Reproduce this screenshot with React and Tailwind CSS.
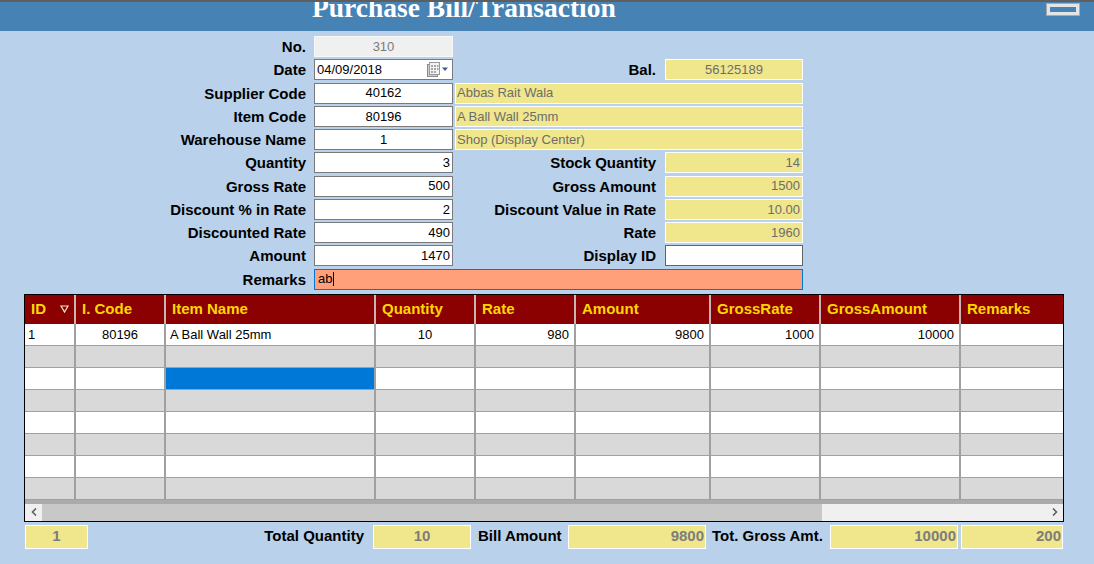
import React from 'react';

const cols = [
  { key: 'id', title: 'ID', w: 'w-[51px]', align: 'text-left pl-[3px]' },
  { key: 'code', title: 'I. Code', w: 'w-[90px]', align: 'text-center' },
  { key: 'name', title: 'Item Name', w: 'w-[210px]', align: 'text-left pl-[4px]' },
  { key: 'qty', title: 'Quantity', w: 'w-[100px]', align: 'text-center' },
  { key: 'rate', title: 'Rate', w: 'w-[100px]', align: 'text-right pr-[5px]' },
  { key: 'amount', title: 'Amount', w: 'w-[135px]', align: 'text-right pr-[5px]' },
  { key: 'grossRate', title: 'GrossRate', w: 'w-[110px]', align: 'text-right pr-[5px]' },
  { key: 'grossAmount', title: 'GrossAmount', w: 'w-[140px]', align: 'text-right pr-[5px]' },
  { key: 'remarks', title: 'Remarks', w: 'w-[102px]', align: 'text-left pl-[4px]' },
];

const rows = [
  { id: '1', code: '80196', name: 'A Ball Wall 25mm', qty: '10', rate: '980', amount: '9800', grossRate: '1000', grossAmount: '10000', remarks: '' },
  {}, {}, {}, {}, {}, {}, {},
];

const Label = ({ children, w = 'w-[306px]' }) => (
  <div className={`${w} shrink-0 text-right text-[15px] font-bold leading-none text-black`}>{children}</div>
);

// white editable box
const Input = ({ children, align = 'justify-center', w = 'w-[139px]', ml = 'ml-[8px]' }) => (
  <div className={`${ml} ${w} ${align} flex h-full shrink-0 items-center border border-[#7a7a7a] bg-white px-[2px] text-[13px] text-black`}>
    {children}
  </div>
);

// yellow read-only box
const ReadBox = ({ children, align = 'justify-end pr-[2px]', w = 'w-[138px]', ml = 'ml-[9px]' }) => (
  <div className={`${ml} ${w} ${align} flex h-full shrink-0 items-center border border-white bg-[#f0e68c] text-[13px] text-[#6d6d6d]`}>
    {children}
  </div>
);

const CalendarIcon = () => (
  <svg width="24" height="15" viewBox="0 0 24 15">
    <rect x="1.5" y="2.5" width="10" height="12" fill="#cfcfcf" stroke="#8a8a8a" />
    <rect x="3.5" y="0.5" width="10" height="12" fill="#f2f2f2" stroke="#9a9a9a" />
    <g fill="#a8a8a8">
      <rect x="5" y="3" width="2" height="2" />
      <rect x="8" y="3" width="2" height="2" />
      <rect x="11" y="3" width="1.5" height="2" />
      <rect x="5" y="6" width="2" height="2" />
      <rect x="8" y="6" width="2" height="2" />
      <rect x="11" y="6" width="1.5" height="2" />
      <rect x="5" y="9" width="2" height="2" />
      <rect x="8" y="9" width="2" height="2" />
    </g>
    <path d="M16 5.5 L22 5.5 L19 9 Z" fill="#3c5a8c" />
  </svg>
);

export default function App() {
  return (
    <div className="h-[564px] w-[1094px] overflow-hidden bg-[#b9d1ea] font-['Liberation_Sans',Arial,sans-serif]">
      {/* Title bar */}
      <div className="relative h-[31px] overflow-hidden border-t-2 border-[#5e5e5e] bg-[#4682b4]">
        <div className="mt-[-8px] pl-[312px] font-['Liberation_Serif','Times_New_Roman',serif] text-[27.5px] font-bold leading-none text-white">
          Purchase Bill/Transaction
        </div>
        <div className="absolute right-[15px] top-[2px] h-[11px] w-[32px] border-[3px] border-[#e4e4e4] bg-[#4682b4] outline outline-1 outline-[#a9a9a9]" />
      </div>

      {/* Form */}
      <div className="flex flex-col gap-[2.26px] pt-[5px]">
        <div className="flex h-[21px] items-center">
          <Label>No.</Label>
          <div className="ml-[8px] flex h-full w-[139px] items-center justify-center border border-[#f8f8f8] bg-[#f0f0f0] text-[13px] text-[#7a7a7a]">
            310
          </div>
        </div>

        <div className="flex h-[21px] items-center">
          <Label>Date</Label>
          <Input align="justify-between">
            <span>04/09/2018</span>
            <CalendarIcon />
          </Input>
          <Label w="w-[203px]">Bal.</Label>
          <ReadBox align="justify-center">56125189</ReadBox>
        </div>

        <div className="flex h-[21px] items-center">
          <Label>Supplier Code</Label>
          <Input>40162</Input>
          <ReadBox w="w-[348px]" ml="ml-[2px]" align="justify-start pl-[1px]">Abbas Rait Wala</ReadBox>
        </div>

        <div className="flex h-[21px] items-center">
          <Label>Item Code</Label>
          <Input>80196</Input>
          <ReadBox w="w-[348px]" ml="ml-[2px]" align="justify-start pl-[1px]">A Ball Wall 25mm</ReadBox>
        </div>

        <div className="flex h-[21px] items-center">
          <Label>Warehouse Name</Label>
          <Input>1</Input>
          <ReadBox w="w-[348px]" ml="ml-[2px]" align="justify-start pl-[1px]">Shop (Display Center)</ReadBox>
        </div>

        <div className="flex h-[21px] items-center">
          <Label>Quantity</Label>
          <Input align="justify-end">3</Input>
          <Label w="w-[203px]">Stock Quantity</Label>
          <ReadBox>14</ReadBox>
        </div>

        <div className="flex h-[21px] items-center">
          <Label>Gross Rate</Label>
          <Input align="justify-end">500</Input>
          <Label w="w-[203px]">Gross Amount</Label>
          <ReadBox>1500</ReadBox>
        </div>

        <div className="flex h-[21px] items-center">
          <Label>Discount % in Rate</Label>
          <Input align="justify-end">2</Input>
          <Label w="w-[203px]">Discount Value in Rate</Label>
          <ReadBox>10.00</ReadBox>
        </div>

        <div className="flex h-[21px] items-center">
          <Label>Discounted Rate</Label>
          <Input align="justify-end">490</Input>
          <Label w="w-[203px]">Rate</Label>
          <ReadBox>1960</ReadBox>
        </div>

        <div className="flex h-[21px] items-center">
          <Label>Amount</Label>
          <Input align="justify-end">1470</Input>
          <Label w="w-[203px]">Display ID</Label>
          <div className="ml-[9px] h-full w-[138px] border border-[#646464] bg-white" />
        </div>

        <div className="flex h-[21px] items-center">
          <Label>Remarks</Label>
          <div className="ml-[8px] flex h-full w-[489px] items-center border border-[#0078d7] bg-[#ffa07a] pl-[3px] text-[13px] text-black">
            ab<span className="ml-[1px] h-[14px] w-px bg-black" />
          </div>
        </div>
      </div>

      {/* Grid */}
      <div className="ml-[24px] mt-[4px] w-[1040px] border border-black bg-white">
        <div className="flex h-[29px] bg-[#8b0000]">
          {cols.map((c, i) => (
            <div
              key={c.key}
              className={`${c.w} flex shrink-0 items-center pl-[6px] text-[15px] font-bold text-[#ffd700] ${
                i < cols.length - 1 ? 'border-r-2 border-[#c8b4b4]' : ''
              }`}
            >
              {c.title}
              {c.key === 'id' && (
                <svg className="ml-[14px]" width="9" height="8" viewBox="0 0 9 8">
                  <path d="M1 1 L8 1 L4.5 7 Z" fill="none" stroke="#f4ecd0" strokeWidth="1.2" />
                </svg>
              )}
            </div>
          ))}
        </div>

        {rows.map((r, ri) => (
          <div key={ri} className={`flex h-[22px] ${ri % 2 === 1 ? 'bg-[#d9d9d9]' : 'bg-white'}`}>
            {cols.map((c, i) => (
              <div
                key={c.key}
                className={`${c.w} ${c.align} shrink-0 border-b border-[#a0a0a0] text-[13px] leading-[21px] text-black ${
                  i < cols.length - 1 ? 'border-r-2' : ''
                } ${ri === 2 && c.key === 'name' ? 'bg-[#0078d7]' : ''}`}
              >
                {r[c.key] || ''}
              </div>
            ))}
          </div>
        ))}

        <div className="h-[4px] bg-[#ababab]" />
        {/* horizontal scrollbar */}
        <div className="flex h-[17px] items-center bg-[#f0f0f0]">
          <div className="flex h-full w-[17px] shrink-0 items-center justify-center">
            <svg width="6" height="8" viewBox="0 0 6 8">
              <path d="M5 0.5 L1.5 4 L5 7.5" fill="none" stroke="#606060" strokeWidth="1.6" />
            </svg>
          </div>
          <div className="h-full w-[780px] bg-[#c8c8c8]" />
          <div className="flex-1" />
          <div className="flex h-full w-[17px] shrink-0 items-center justify-center">
            <svg width="6" height="8" viewBox="0 0 6 8">
              <path d="M1 0.5 L4.5 4 L1 7.5" fill="none" stroke="#606060" strokeWidth="1.6" />
            </svg>
          </div>
        </div>
      </div>

      {/* Totals */}
      <div className="mt-[3px] flex h-[24px] items-center whitespace-nowrap text-[15px] font-bold">
        <div className="ml-[25px] flex h-full w-[63px] items-center justify-center border border-white bg-[#f0e68c] text-[#7d7d7d]">1</div>
        <div className="w-[276px] text-right text-black">Total Quantity</div>
        <div className="ml-[9px] flex h-full w-[98px] items-center justify-center border border-white bg-[#f0e68c] text-[#7d7d7d]">10</div>
        <div className="ml-[7px] w-[83px] text-black">Bill Amount</div>
        <div className="ml-[7px] flex h-full w-[138px] items-center justify-end border border-white bg-[#f0e68c] pr-[1px] text-[#7d7d7d]">9800</div>
        <div className="ml-[6px] w-[112px] text-black">Tot. Gross Amt.</div>
        <div className="ml-[6px] flex h-full w-[128px] items-center justify-end border border-white bg-[#f0e68c] pr-[1px] text-[#7d7d7d]">10000</div>
        <div className="ml-[3px] flex h-full w-[102px] items-center justify-end border border-white bg-[#f0e68c] pr-[1px] text-[#7d7d7d]">200</div>
      </div>
    </div>
  );
}
